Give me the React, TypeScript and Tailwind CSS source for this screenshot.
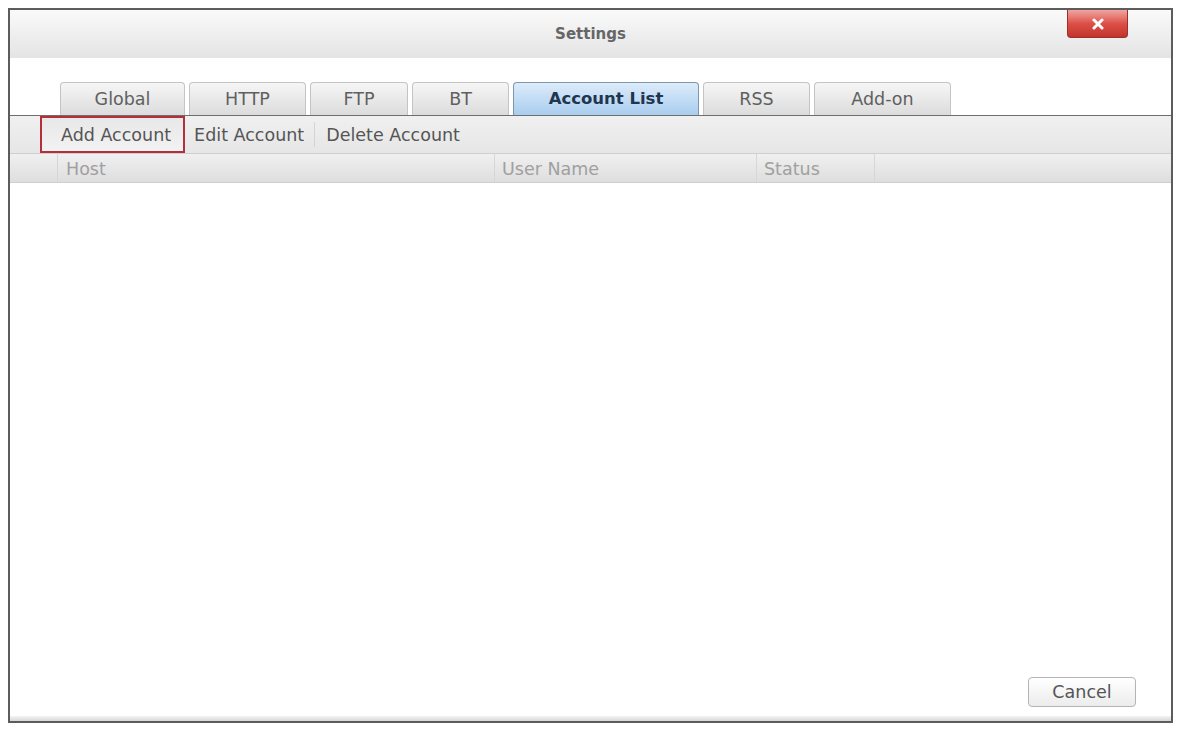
import React from 'react';

const tabs = [
  { label: 'Global', w: 'w-[125px]' },
  { label: 'HTTP', w: 'w-[117px]' },
  { label: 'FTP', w: 'w-[98px]' },
  { label: 'BT', w: 'w-[97px]' },
  { label: 'Account List', w: 'w-[186px]', active: true },
  { label: 'RSS', w: 'w-[107px]' },
  { label: 'Add-on', w: 'w-[137px]' },
];

function CloseButton() {
  return (
    <button className="absolute right-[43px] top-0 flex h-[28px] w-[61px] items-center justify-center rounded-b-[4px] border border-t-0 border-[#9c2f2a] bg-gradient-to-b from-[#f0a4a0] via-[#dc5048] to-[#c3322a]">
      <svg width="12" height="12" viewBox="0 0 12 12">
        <path d="M2 2 L10 10 M10 2 L2 10" stroke="#fff" strokeWidth="3" strokeLinecap="round" />
      </svg>
    </button>
  );
}

export default function App() {
  return (
    <div className="min-h-screen bg-white pl-[8px] pt-[8px] font-['DejaVu_Sans',sans-serif]">
      <div className="relative flex h-[715px] w-[1165px] flex-col border-2 border-[#5c5c5c] bg-white">
        {/* Title bar */}
        <div className="relative flex h-[48px] shrink-0 items-center justify-center bg-gradient-to-b from-[#fafafa] to-[#e4e4e4]">
          <span className="text-[15px] font-bold text-[#666]">Settings</span>
          <CloseButton />
        </div>

        {/* Tab strip */}
        <div className="mt-[25px] flex h-[33px] shrink-0 items-end gap-[4px] border-b border-[#6e6e6e] pl-[50px]">
          {tabs.map((t) =>
            t.active ? (
              <div
                key={t.label}
                className={`${t.w} flex h-[33px] items-center justify-center rounded-t-[4px] border border-b-0 border-[#7f97ad] bg-gradient-to-b from-[#dcecfa] to-[#a9cdef] text-[16.5px] font-bold text-[#1f3550]`}
              >
                {t.label}
              </div>
            ) : (
              <div
                key={t.label}
                className={`${t.w} flex h-[33px] items-center justify-center rounded-t-[4px] border border-b-0 border-[#c4c4c4] bg-gradient-to-b from-[#f6f6f6] to-[#dcdcdc] pt-[1px] text-[17.5px] text-[#606060]`}
              >
                {t.label}
              </div>
            )
          )}
        </div>

        {/* Toolbar */}
        <div className="flex h-[38px] shrink-0 items-stretch border-b border-[#cfcfcf] bg-gradient-to-b from-[#f0f0f0] to-[#e6e6e6] text-[17.5px] text-[#555]">
          <div className="ml-[30px] flex items-center border-2 border-[#b3303a] bg-gradient-to-b from-[#e8e8e8] to-[#f2f2f2] pl-[19px] pr-[12px] pt-[2px]">
            Add Account
          </div>
          <div className="flex items-center pl-[9px] pr-[10px] pt-[2px]">Edit Account</div>
          <div className="my-[6px] w-px bg-[#d4d4d4]" />
          <div className="flex items-center pl-[11px] pt-[2px]">Delete Account</div>
        </div>

        {/* Column headers */}
        <div className="flex h-[29px] shrink-0 border-b border-[#cfcfcf] bg-gradient-to-b from-[#f0f0f0] to-[#dedede] text-[17.5px] text-[#a0a0a0]">
          <div className="w-[48px] border-r border-[#d6d6d6]" />
          <div className="flex w-[437px] items-center border-r border-[#d6d6d6] pl-[8px] pt-[2px]">Host</div>
          <div className="flex w-[262px] items-center border-r border-[#d6d6d6] pl-[7px] pt-[2px]">User Name</div>
          <div className="flex w-[118px] items-center border-r border-[#d6d6d6] pl-[7px] pt-[2px]">Status</div>
          <div className="flex-1" />
        </div>

        {/* Empty list body */}
        <div className="relative flex-1 bg-white">
          <button className="absolute bottom-[9px] right-[35px] h-[30px] w-[108px] rounded-[4px] border border-[#b4b4b4] bg-gradient-to-b from-[#ffffff] to-[#ececec] pt-[1px] text-[17.5px] text-[#555]">
            Cancel
          </button>
        </div>
        <div className="h-[5px] shrink-0 bg-gradient-to-b from-[#f4f4f4] to-[#d8d8d8]" />
      </div>
    </div>
  );
}
